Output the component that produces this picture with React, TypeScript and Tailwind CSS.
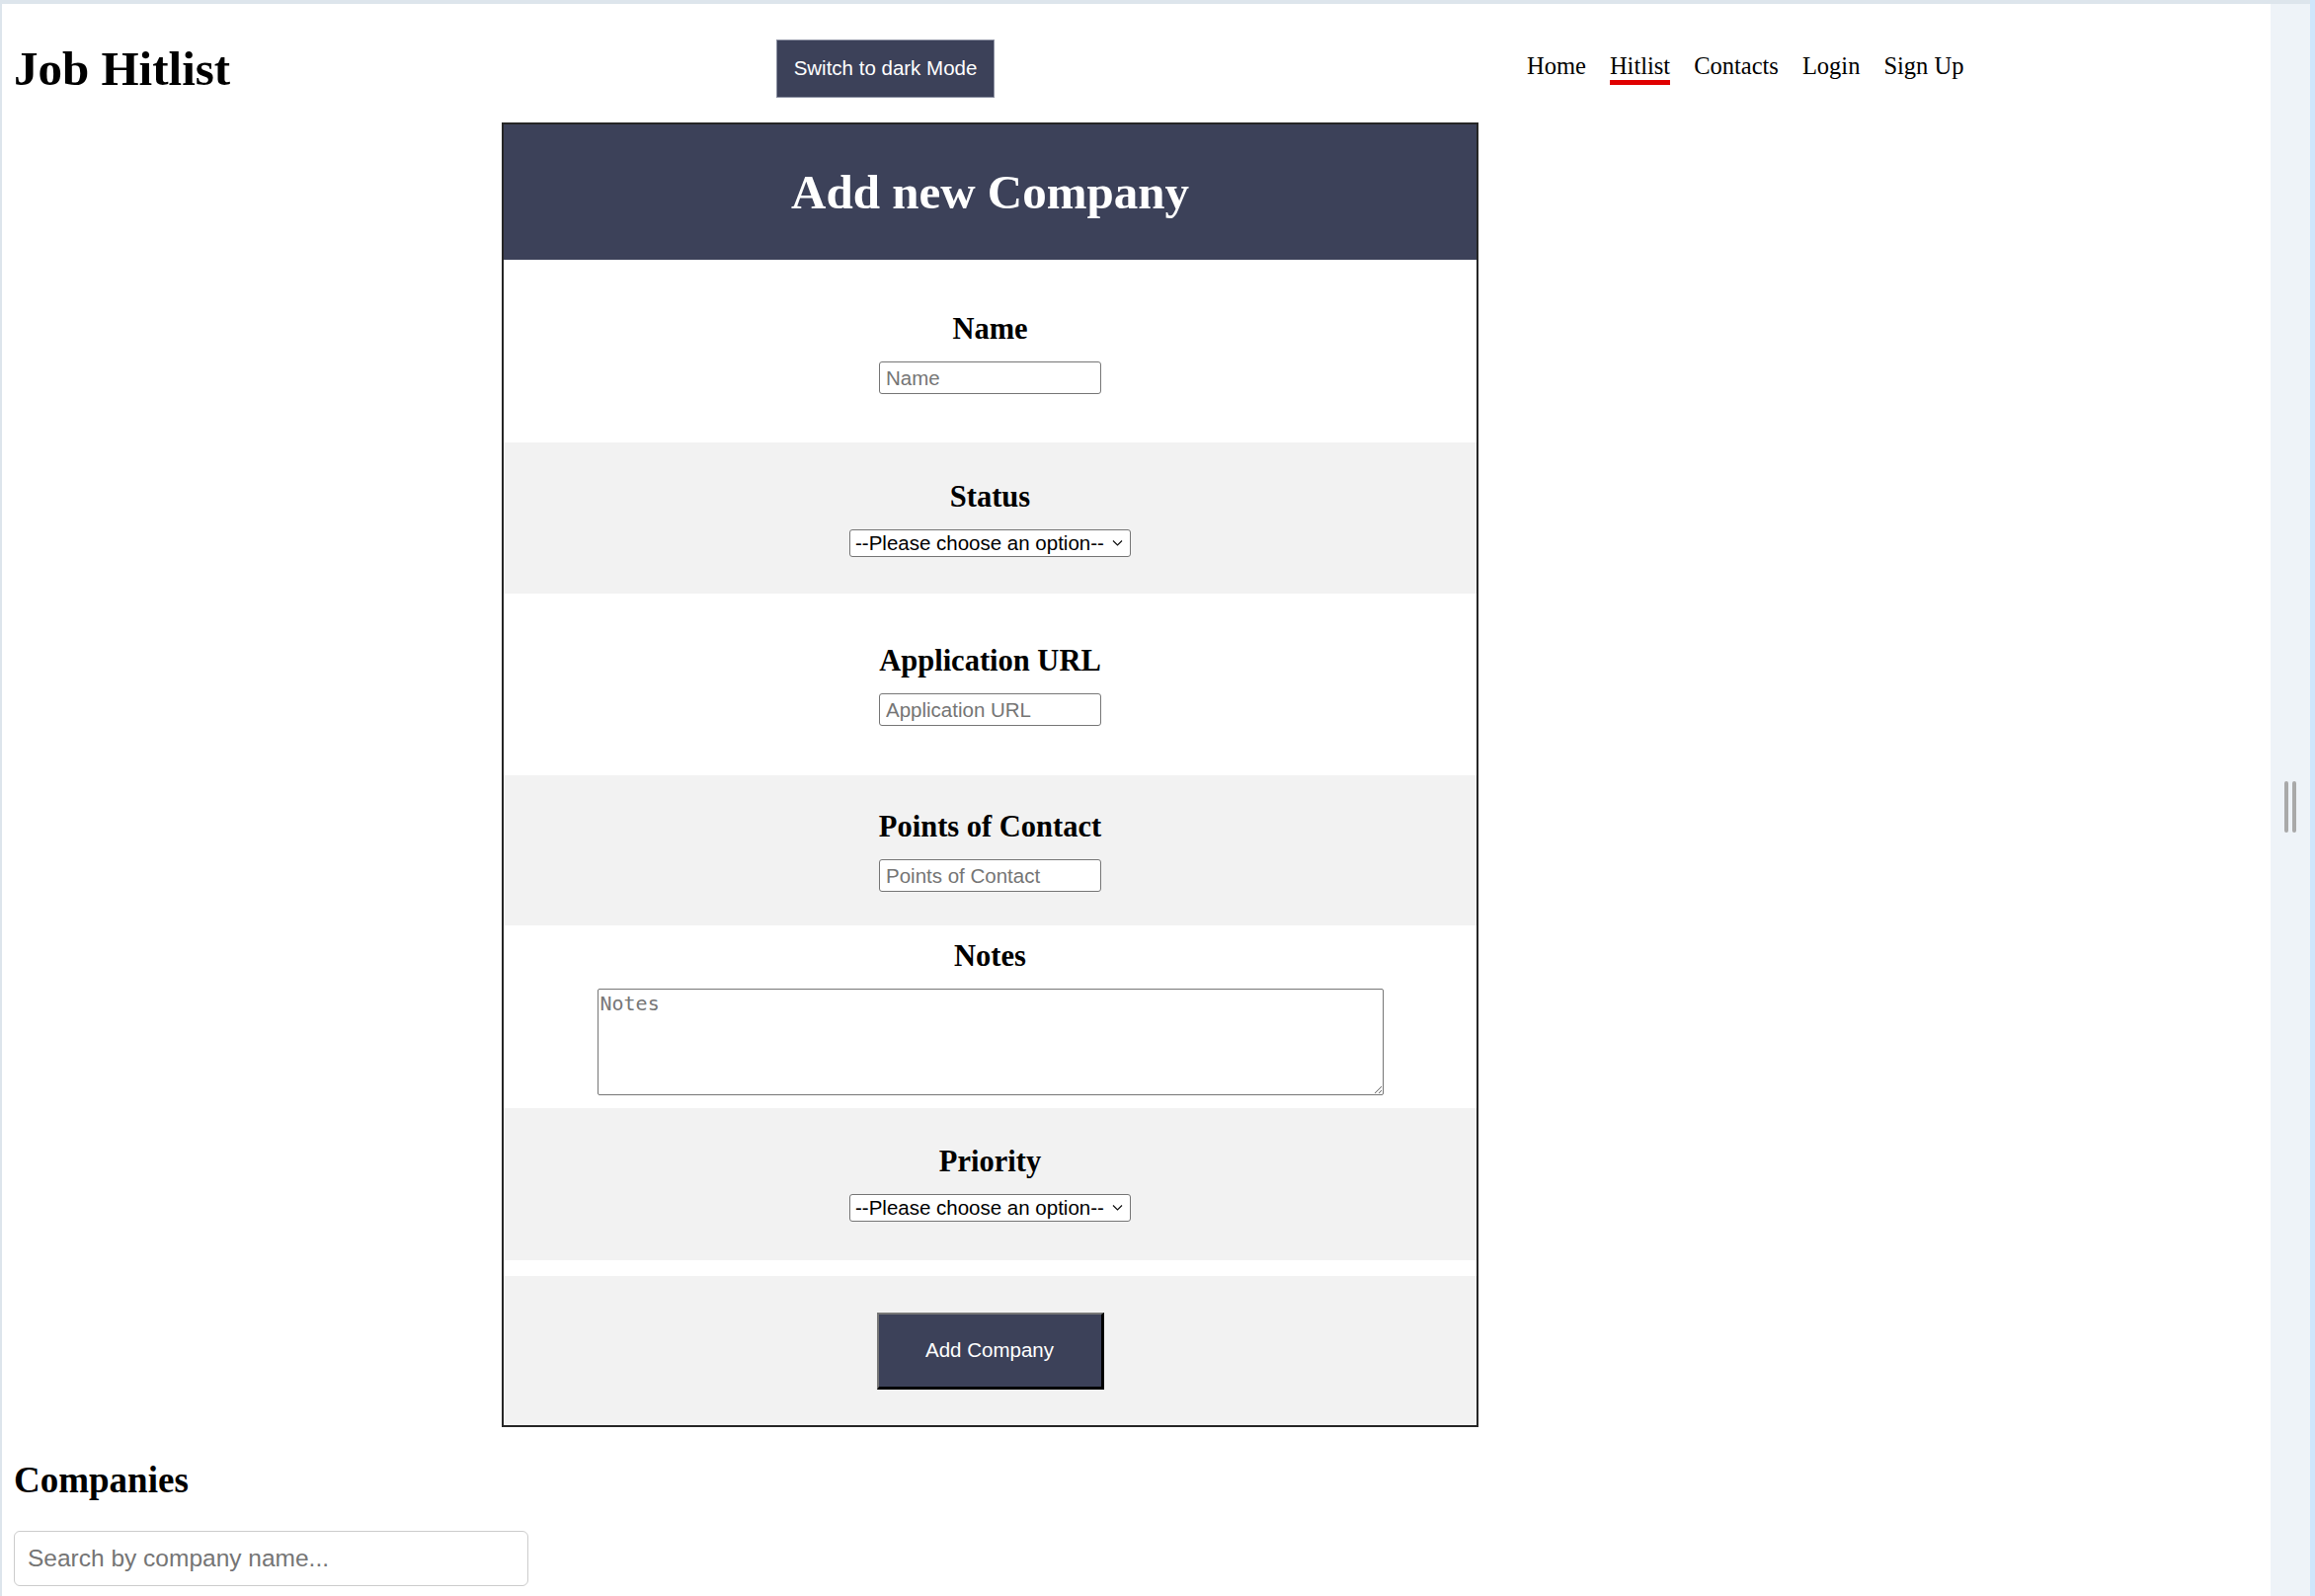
import React from "react";

type Field = {
  label: string;
  kind: "input" | "select" | "textarea";
  grey: boolean;
  pad: string;
};

const fields: Field[] = [
  { label: "Name", kind: "input", grey: false, pad: "pt-[53px] pb-[49px]" },
  { label: "Status", kind: "select", grey: true, pad: "pt-[38px] pb-[37px]" },
  { label: "Application URL", kind: "input", grey: false, pad: "pt-[51px] pb-[50px]" },
  { label: "Points of Contact", kind: "input", grey: true, pad: "pt-[35px] pb-[34px]" },
  { label: "Notes", kind: "textarea", grey: false, pad: "pt-[14px] pb-[13px]" },
  { label: "Priority", kind: "select", grey: true, pad: "pt-[37px] pb-[39px]" },
];

function ChoiceSelect() {
  return (
    <div className="relative w-[285px]">
      <select className="h-[28px] w-full appearance-none rounded-[3px] border-[1.5px] border-[#767676] bg-white pl-[5px] pr-[20px] font-['Liberation_Sans',sans-serif] text-[20.5px] leading-[24px] text-black">
        <option>--Please choose an option--</option>
      </select>
      <svg
        className="pointer-events-none absolute right-[8px] top-1/2 -translate-y-1/2"
        width="11"
        height="7"
        viewBox="0 0 11 7"
      >
        <path d="M1 1l4.5 4.5L10 1" fill="none" stroke="#111" strokeWidth="1.2" />
      </svg>
    </div>
  );
}

function Control({ field }: { field: Field }) {
  if (field.kind === "select") return <ChoiceSelect />;
  if (field.kind === "textarea")
    return (
      <textarea
        placeholder={field.label}
        className="h-[108px] w-[796px] rounded-[2px] border-[1.5px] border-[#767676] bg-white px-[2px] py-[2px] font-['DejaVu_Sans_Mono',monospace] text-[20px] leading-[24px] placeholder:text-[#777]"
      />
    );
  return (
    <input
      placeholder={field.label}
      className="h-[33px] w-[225px] rounded-[3px] border-[1.5px] border-[#767676] bg-white pl-[6px] pr-[4px] font-['Liberation_Sans',sans-serif] text-[20.5px] placeholder:text-[#757575]"
    />
  );
}

export default function App() {
  return (
    <div className="flex h-[1616px] overflow-hidden">
      <div className="flex flex-1 bg-[#dde5ec] pl-[2px] pt-[4px]">
        <main className="flex-1 bg-white pl-[12px] font-['Liberation_Serif',serif] text-black">
          <header className="mt-[36px] flex h-[59px] items-center">
            <h1 className="w-[772px] text-[49px] font-bold leading-[55px]">Job Hitlist</h1>
            <button className="h-[59px] w-[221px] border border-[#8d92a3] bg-[#3c4159] font-['Liberation_Sans',sans-serif] text-[20.5px] text-white">
              Switch to dark Mode
            </button>
            <nav className="ml-[539px] flex gap-[24px] text-[24.5px] leading-[28px]">
              <a className="border-b-[5px] border-transparent">Home</a>
              <a className="border-b-[5px] border-[#e00000]">Hitlist</a>
              <a className="border-b-[5px] border-transparent">Contacts</a>
              <a className="border-b-[5px] border-transparent">Login</a>
              <a className="border-b-[5px] border-transparent">Sign Up</a>
            </nav>
          </header>

          <form className="ml-[494px] mt-[25px] w-[989px] border-2 border-[#262626]">
            <div className="flex h-[137px] items-center justify-center bg-[#3c4159]">
              <h2 className="text-[49px] font-bold leading-[55px] text-white">Add new Company</h2>
            </div>

            {fields.map((f) => (
              <div
                key={f.label}
                className={`flex flex-col items-center gap-[16px] ${f.pad} ${f.grey ? "bg-[#f2f2f2]" : "bg-white"}`}
              >
                <label className="text-[30.5px] font-bold leading-[34px]">{f.label}</label>
                <Control field={f} />
              </div>
            ))}

            <div className="mt-[16px] flex justify-center bg-[#f2f2f2] pb-[36px] pt-[37px]">
              <button
                type="button"
                className="h-[78px] w-[230px] border-b-[3px] border-l-2 border-r-[3px] border-t-2 border-b-black border-l-[#777] border-r-black border-t-[#777] bg-[#3c4159] font-['Liberation_Sans',sans-serif] text-[20.5px] text-white"
              >
                Add Company
              </button>
            </div>
          </form>

          <h2 className="mt-[33px] text-[37px] font-bold leading-[41px]">Companies</h2>
          <input
            placeholder="Search by company name..."
            className="mt-[31px] h-[56px] w-[521px] rounded-[6px] border-[1.5px] border-[#cccccc] px-[13px] font-['Liberation_Sans',sans-serif] text-[24.5px] placeholder:text-[#757575]"
          />
        </main>

        {/* side strip with the drag handle */}
        <aside className="flex w-[40px] justify-center bg-[#eef3f8] pt-[787px]">
          <div className="flex h-[52px] gap-[4px]">
            <span className="w-[4px] rounded-full bg-[#a9a9a9]" />
            <span className="w-[4px] rounded-full bg-[#a9a9a9]" />
          </div>
        </aside>
      </div>
      <div className="w-[5px] bg-[#cfe6fb]" />
    </div>
  );
}
